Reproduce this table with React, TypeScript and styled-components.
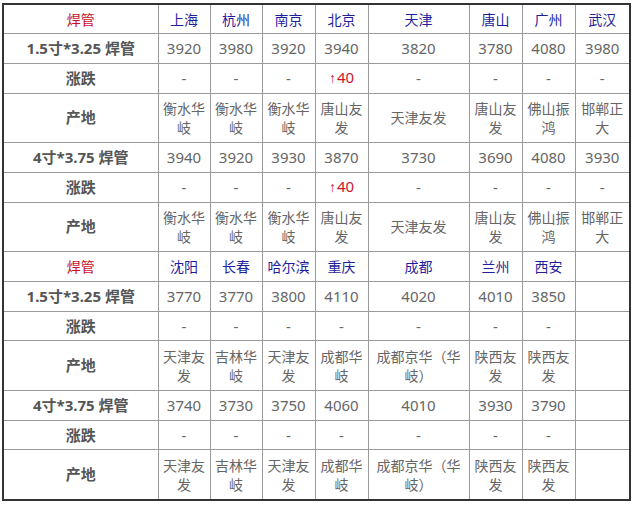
import React from "react";
import styled, { createGlobalStyle } from "styled-components";

const GlobalStyle = createGlobalStyle`
  html, body { margin: 0; padding: 0; background: #ffffff; }
  body { font-family: "Noto Sans", "Noto Sans CJK SC", sans-serif; }
`;

const Page = styled.div`
  padding: 3px 0 0 2px;
  width: 632px;
  box-sizing: border-box;
`;

const Table = styled.table`
  width: 627px;
  border-collapse: collapse;
  table-layout: fixed;
  border: 2px solid #333333;
  font-size: 14px;
`;

const Row = styled.tr<{ $tall?: boolean }>`
  height: ${(p) => (p.$tall ? "49.7px" : "29.7px")};
`;

const Cell = styled.td<{ $kind?: "label" | "section" | "city" | "value" | "up" }>`
  border: 1px solid #9a9a9a;
  padding: 0 4px;
  text-align: center;
  vertical-align: middle;
  line-height: 19px;
  color: ${(p) =>
    p.$kind === "section"
      ? "#c8102e"
      : p.$kind === "city"
      ? "#1f1f9e"
      : p.$kind === "up"
      ? "#d0142c"
      : p.$kind === "label"
      ? "#555555"
      : "#666666"};
  font-weight: ${(p) => (p.$kind === "label" ? 700 : 400)};
  font-size: ${(p) => (p.$kind === "value" || p.$kind === "up" || p.$kind === "label" ? "15px" : "14px")};
  word-break: break-all;
`;

const Arrow = styled.span`
  font-family: "Liberation Sans", "DejaVu Sans", sans-serif;
  font-size: 14px;
  margin-right: 1px;
`;

const widths = [155, 52, 52, 53, 53, 101, 53, 53, 55];

type Section = {
  cities: string[];
  p1: string[];
  c1: string[];
  o1: string[];
  p2: string[];
  c2: string[];
  o2: string[];
};

const origin1 = ["衡水华岐", "衡水华岐", "衡水华岐", "唐山友发", "天津友发", "唐山友发", "佛山振鸿", "邯郸正大"];
const origin2 = ["天津友发", "吉林华岐", "天津友发", "成都华岐", "成都京华（华岐）", "陕西友发", "陕西友发", ""];

const sections: Section[] = [
  {
    cities: ["上海", "杭州", "南京", "北京", "天津", "唐山", "广州", "武汉"],
    p1: ["3920", "3980", "3920", "3940", "3820", "3780", "4080", "3980"],
    c1: ["-", "-", "-", "↑40", "-", "-", "-", "-"],
    o1: origin1,
    p2: ["3940", "3920", "3930", "3870", "3730", "3690", "4080", "3930"],
    c2: ["-", "-", "-", "↑40", "-", "-", "-", "-"],
    o2: origin1,
  },
  {
    cities: ["沈阳", "长春", "哈尔滨", "重庆", "成都", "兰州", "西安", ""],
    p1: ["3770", "3770", "3800", "4110", "4020", "4010", "3850", ""],
    c1: ["-", "-", "-", "-", "-", "-", "-", ""],
    o1: origin2,
    p2: ["3740", "3730", "3750", "4060", "4010", "3930", "3790", ""],
    c2: ["-", "-", "-", "-", "-", "-", "-", ""],
    o2: origin2,
  },
];

const DataRow: React.FC<{ label: string; values: string[]; tall?: boolean }> = ({ label, values, tall }) => (
  <Row $tall={tall}>
    <Cell $kind="label">{label}</Cell>
    {values.map((v, i) =>
      v.startsWith("↑") ? (
        <Cell key={i} $kind="up">
          <Arrow>↑</Arrow>
          {v.slice(1)}
        </Cell>
      ) : (
        <Cell key={i} $kind={v === "-" || /^\d+$/.test(v) ? "value" : undefined}>
          {v}
        </Cell>
      )
    )}
  </Row>
);

export default function App() {
  return (
    <Page>
      <GlobalStyle />
      <Table>
        <colgroup>
          {widths.map((w, i) => (
            <col key={i} style={{ width: w }} />
          ))}
        </colgroup>
        <tbody>
          {sections.map((s, si) => (
            <React.Fragment key={si}>
              <Row>
                <Cell $kind="section">焊管</Cell>
                {s.cities.map((c, i) => (
                  <Cell key={i} $kind="city">
                    {c}
                  </Cell>
                ))}
              </Row>
              <DataRow label="1.5寸*3.25 焊管" values={s.p1} />
              <DataRow label="涨跌" values={s.c1} />
              <DataRow label="产地" values={s.o1} tall />
              <DataRow label="4寸*3.75 焊管" values={s.p2} />
              <DataRow label="涨跌" values={s.c2} />
              <DataRow label="产地" values={s.o2} tall />
            </React.Fragment>
          ))}
        </tbody>
      </Table>
    </Page>
  );
}
